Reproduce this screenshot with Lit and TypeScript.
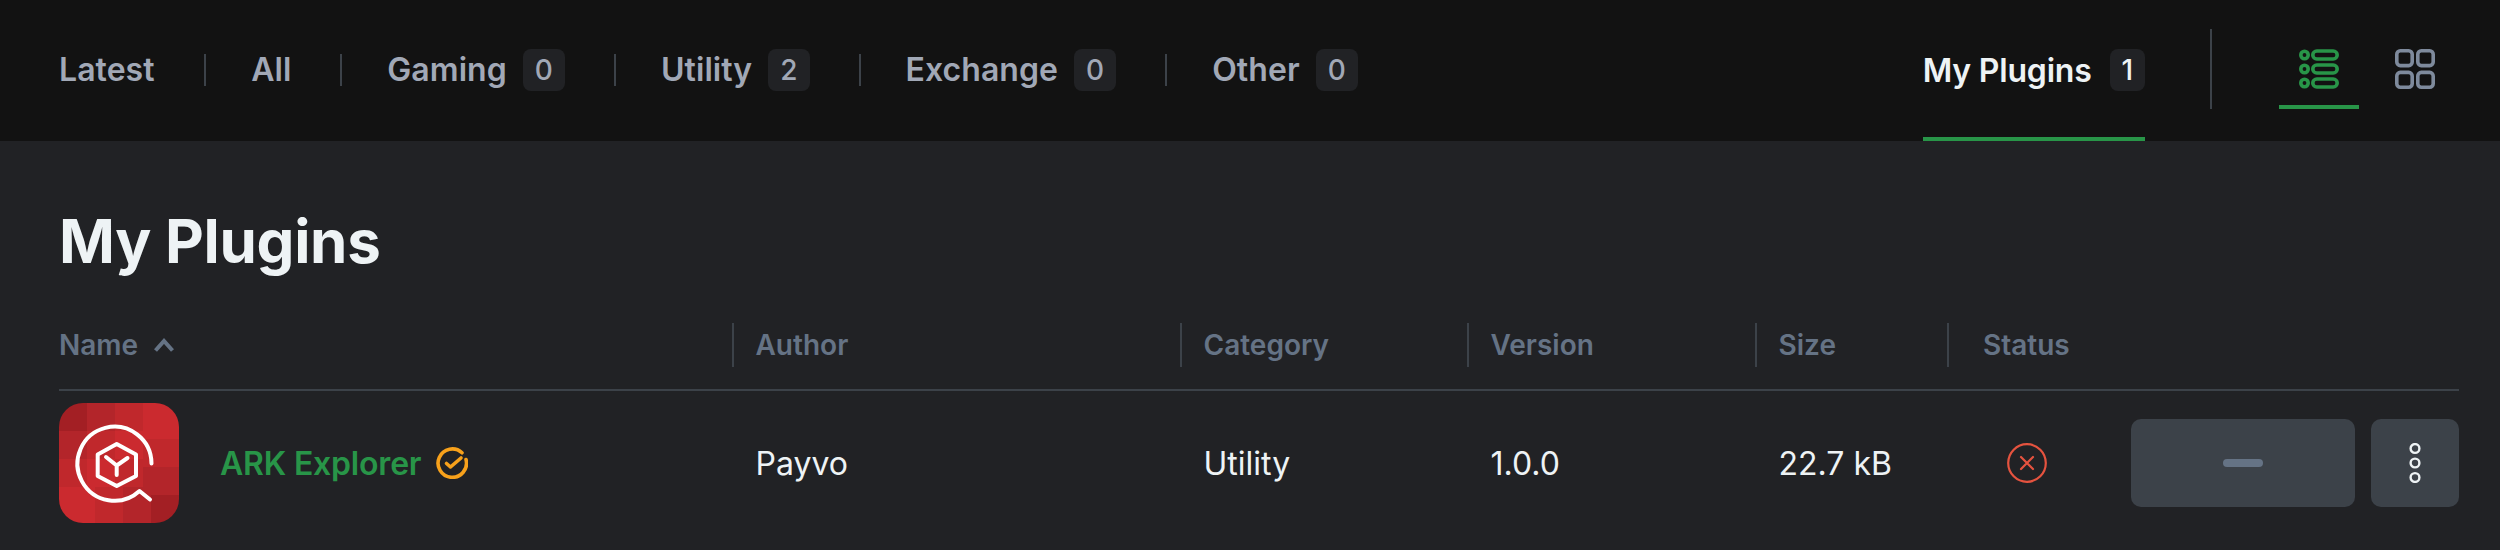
import { LitElement, html, css, svg } from "lit";
import { customElement } from "lit/decorators.js";

const tabs = [
  { label: "Latest" },
  { label: "All" },
  { label: "Gaming", count: 0 },
  { label: "Utility", count: 2 },
  { label: "Exchange", count: 0 },
  { label: "Other", count: 0 },
];

const columns = ["Author", "Category", "Version", "Size"];

// mosaic tiles behind the plugin logo: x, y, w, h, fill
const tiles: [number, number, number, number, string][] = [
  [0, 0, 28, 28, "#a31f24"],
  [28, 0, 28, 28, "#b3252a"],
  [56, 0, 28, 28, "#c0282c"],
  [84, 0, 36, 36, "#cb2a2f"],
  [0, 28, 28, 28, "#b3252a"],
  [28, 28, 28, 28, "#c0282c"],
  [56, 28, 28, 28, "#cb2a2f"],
  [84, 36, 36, 28, "#c0282c"],
  [0, 56, 28, 28, "#c0282c"],
  [28, 56, 28, 28, "#cb2a2f"],
  [56, 56, 28, 28, "#c0282c"],
  [84, 64, 36, 28, "#b3252a"],
  [0, 84, 36, 36, "#cb2a2f"],
  [36, 84, 28, 36, "#c0282c"],
  [64, 84, 28, 36, "#b3252a"],
  [84, 92, 8, 28, "#b3252a"],
  [92, 92, 28, 28, "#a31f24"],
];

@customElement("app-root")
export class AppRoot extends LitElement {
  static override styles = css`
    :host {
      display: block;
      height: 550px;
      background: #212225;
      font-family: Inter, "Liberation Sans", sans-serif;
      overflow: hidden;
    }

    .nav {
      display: flex;
      justify-content: space-between;
      height: 141px;
      padding: 0 45px 0 59px;
      background: #121212;
    }

    .tabs,
    .nav-right,
    .tab {
      display: flex;
      align-items: center;
    }

    .tabs {
      padding-bottom: 2px;
    }

    .tab {
      height: 32px;
      padding: 0 49px 0 45px;
      border-right: 2px solid #3c4249;
      color: #a1a8b6;
      font-size: 32px;
      font-weight: 600;
      line-height: 42px;
      letter-spacing: 0.06px;
    }

    .tab:first-child {
      padding-left: 0;
      padding-right: 49.5px;
    }

    .tab:last-child {
      border-right: 0;
    }

    .badge {
      display: flex;
      align-items: center;
      justify-content: center;
      height: 42px;
      margin-left: 16px;
      padding: 0 12px;
      box-sizing: border-box;
      border-radius: 8px;
      background: #212225;
      font-weight: 500;
      font-size: 28px;
    }

    .my-plugins {
      display: flex;
      align-items: center;
      align-self: stretch;
      box-sizing: border-box;
      border-bottom: 4px solid #289548;
      padding-top: 3px;
      color: #eef3f5;
      font-size: 32px;
      font-weight: 600;
      letter-spacing: -0.2px;
    }

    .my-plugins .badge {
      margin-left: 18px;
    }

    .view-switch {
      display: flex;
      align-items: center;
      gap: 16px;
      margin: 0 0 3px 65px;
      padding-left: 67px;
      height: 80px;
      border-left: 2px solid #3c4249;
    }

    .view {
      display: flex;
      justify-content: center;
      box-sizing: border-box;
      width: 80px;
      height: 80px;
      padding-top: 20px;
      color: #7e8a9c;
    }

    .view.active {
      border-bottom: 4px solid #289548;
      color: #289548;
    }

    .view svg {
      display: block;
    }

    .content {
      padding: 0 41px 0 59px;
    }

    h1 {
      margin: 0;
      padding-top: 64px;
      color: #eef3f5;
      font-size: 60px;
      font-weight: 700;
      line-height: 72px;
      letter-spacing: -0.3px;
    }

    .row {
      display: grid;
      grid-template-columns: 673px 448px 287px 288px 192px 1fr;
      align-items: center;
    }

    .head {
      height: 44px;
      margin-top: 46px;
      padding-bottom: 22px;
      border-bottom: 2px solid #3c4249;
      color: #657385;
      font-size: 28px;
      font-weight: 600;
    }

    .head > div {
      display: flex;
      align-items: center;
      height: 44px;
      padding-left: 21.5px;
      border-left: 2px solid #3c4249;
    }

    .head > .name {
      gap: 16px;
      padding-left: 0;
      border-left: 0;
    }

    .head > .status {
      padding-left: 34px;
    }

    .plugin {
      height: 120px;
      margin-top: 12px;
      color: #eef3f5;
      font-size: 32px;
    }

    .plugin > div {
      padding-left: 23.5px;
    }

    .plugin > .name {
      display: flex;
      align-items: center;
      padding-left: 0;
    }

    .logo {
      display: block;
      width: 120px;
      height: 120px;
      border-radius: 24px;
    }

    .title {
      margin: 0 15px 0 41px;
      color: #289548;
      font-weight: 600;
      letter-spacing: -0.2px;
    }

    .plugin > .status {
      display: flex;
      align-items: center;
      justify-content: space-between;
      padding-left: 60px;
    }

    .actions {
      display: flex;
      gap: 16px;
    }

    .button {
      display: flex;
      align-items: center;
      justify-content: center;
      height: 88px;
      width: 88px;
      border-radius: 10px;
      background: #3c4249;
    }

    .button.wide {
      width: 224px;
    }

    .dash {
      width: 40px;
      height: 8px;
      border-radius: 4px;
      background: #657385;
    }
  `;

  renderListIcon() {
    return html`<svg width="40" height="40" viewBox="0 0 40 40" fill="none" stroke="currentColor" stroke-width="3.6">
      ${[6, 20, 34].map(
        (y) => svg`
          <circle cx="5.5" cy=${y} r="3.7" />
          <rect x="13.8" y=${y - 4} width="24.4" height="8" rx="4" />
        `
      )}
    </svg>`;
  }

  renderGridIcon() {
    return html`<svg width="40" height="40" viewBox="0 0 40 40" fill="none" stroke="currentColor" stroke-width="3.6">
      <rect x="1.8" y="1.8" width="15.4" height="14.8" rx="3.5" />
      <rect x="22.8" y="1.8" width="15.4" height="14.8" rx="3.5" />
      <rect x="1.8" y="23.4" width="15.4" height="14.8" rx="3.5" />
      <rect x="22.8" y="23.4" width="15.4" height="14.8" rx="3.5" />
    </svg>`;
  }

  renderLogo() {
    return html`<svg class="logo" viewBox="0 0 120 120">
      ${tiles.map(([x, y, w, h, fill]) => svg`<rect x=${x} y=${y} width=${w} height=${h} fill=${fill} />`)}
      <g fill="none" stroke="#fff" stroke-width="4" stroke-linecap="round" stroke-linejoin="round">
        <path d="M92.5 60.5A37 37 0 1 0 80.5 88L91 96.5" />
        <path d="M57.7 41L77 51.5V73L57.7 83L38.7 73V51.5Z" />
        <path d="M47 54L57.7 62.5L68.5 55M57.7 62.5V72" />
      </g>
    </svg>`;
  }

  override render() {
    return html`
      <div class="nav">
        <div class="tabs">
          ${tabs.map(
            (t) => html`<div class="tab">
              ${t.label}${t.count !== undefined ? html`<span class="badge">${t.count}</span>` : ""}
            </div>`
          )}
        </div>
        <div class="nav-right">
          <div class="my-plugins">My Plugins<span class="badge">1</span></div>
          <div class="view-switch">
            <div class="view active">${this.renderListIcon()}</div>
            <div class="view">${this.renderGridIcon()}</div>
          </div>
        </div>
      </div>

      <div class="content">
        <h1>My Plugins</h1>

        <div class="row head">
          <div class="name">
            Name
            <svg width="20" height="14" viewBox="0 0 20 14" fill="none" stroke="currentColor" stroke-width="4">
              <path d="M1.5 12.5L10 3L18.5 12.5" />
            </svg>
          </div>
          ${columns.map((c) => html`<div>${c}</div>`)}
          <div class="status">Status</div>
        </div>

        <div class="row plugin">
          <div class="name">
            ${this.renderLogo()}
            <span class="title">ARK Explorer</span>
            <svg width="32" height="32" viewBox="0 0 32 32" fill="none" stroke="#f7a11b" stroke-width="3.6" stroke-linecap="round" stroke-linejoin="round">
              <path d="M30 12.5A14.2 14.2 0 1 1 26 5.8" />
              <path d="M10.5 16.5L14.5 20L25 11" />
            </svg>
          </div>
          <div>Payvo</div>
          <div>Utility</div>
          <div>1.0.0</div>
          <div>22.7 kB</div>
          <div class="status">
            <svg width="40" height="40" viewBox="0 0 40 40" fill="none" stroke="#e5533f" stroke-width="2.2" stroke-linecap="round">
              <circle cx="20" cy="20" r="18.8" />
              <path d="M14 14L26 26M26 14L14 26" />
            </svg>
            <div class="actions">
              <div class="button wide"><span class="dash"></span></div>
              <div class="button">
                <svg width="12" height="40" viewBox="0 0 12 40" fill="none" stroke="#eef3f5" stroke-width="2.4">
                  <circle cx="6" cy="5.5" r="4.4" />
                  <circle cx="6" cy="20" r="4.4" />
                  <circle cx="6" cy="34.5" r="4.4" />
                </svg>
              </div>
            </div>
          </div>
        </div>
      </div>
    `;
  }
}
